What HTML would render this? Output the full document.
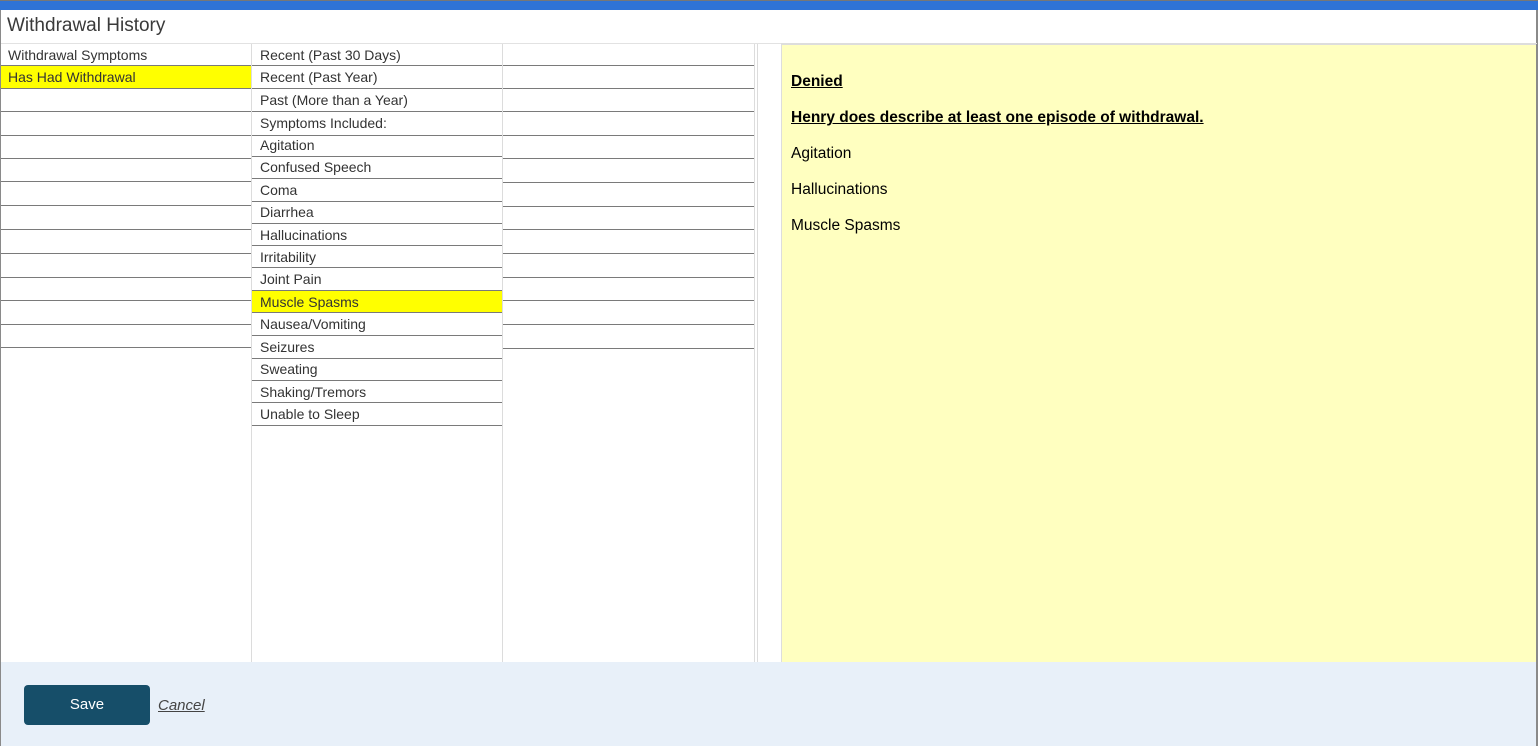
<!DOCTYPE html>
<html><head><style>
*{margin:0;padding:0;box-sizing:border-box}
body{width:1538px;height:746px;position:relative;overflow:hidden;background:#fff;font-family:"Liberation Sans",sans-serif}
.a{position:absolute}
.l{position:absolute;height:1px;background:#7a7a7a}
.t{position:absolute;font-size:14px;color:#333;line-height:22px;white-space:nowrap}
.y{font-size:15.5px;color:#000;position:absolute;left:791px;white-space:nowrap}
</style></head><body>
<div class="a" style="left:0;top:0;width:1538px;height:1px;background:#777"></div>
<div class="a" style="left:0;top:1px;width:1538px;height:9px;background:#2f73d6"></div>
<div class="a" style="left:0;top:10px;width:1px;height:736px;background:#8a8a8a"></div>
<div class="a" style="left:1536px;top:10px;width:2px;height:736px;background:#8a8a8a"></div>
<div class="a" style="left:7px;top:15px;font-size:19px;color:#3a3a3a;">Withdrawal History</div>
<div class="a" style="left:1px;top:43px;width:1536px;height:1px;background:#e2e2e2"></div>
<div class="a" style="left:251px;top:44px;width:1px;height:618px;background:#dcdcdc"></div>
<div class="a" style="left:502px;top:44px;width:1px;height:618px;background:#dcdcdc"></div>
<div class="a" style="left:754px;top:44px;width:1px;height:618px;background:#dcdcdc"></div>
<div class="a" style="left:757px;top:44px;width:1px;height:618px;background:#dcdcdc"></div>
<div class="a" style="left:781px;top:43px;width:755px;height:619px;background:#ffffc0;border-top:2px solid #ddd;border-left:1px solid #ddd"></div>
<div class="a" style="left:1px;top:66px;width:250px;height:22px;background:#ffff00"></div>
<div class="a" style="left:252px;top:291px;width:250px;height:21px;background:#ffff00"></div>
<div class="l" style="left:1px;top:65px;width:250px"></div><div class="l" style="left:503px;top:65px;width:251px"></div>
<div class="l" style="left:1px;top:88px;width:250px"></div><div class="l" style="left:503px;top:88px;width:251px"></div>
<div class="l" style="left:1px;top:111px;width:250px"></div><div class="l" style="left:503px;top:111px;width:251px"></div>
<div class="l" style="left:1px;top:135px;width:250px"></div><div class="l" style="left:503px;top:135px;width:251px"></div>
<div class="l" style="left:1px;top:158px;width:250px"></div><div class="l" style="left:503px;top:158px;width:251px"></div>
<div class="l" style="left:1px;top:181px;width:250px"></div><div class="l" style="left:503px;top:182px;width:251px"></div>
<div class="l" style="left:1px;top:205px;width:250px"></div><div class="l" style="left:503px;top:206px;width:251px"></div>
<div class="l" style="left:1px;top:229px;width:250px"></div><div class="l" style="left:503px;top:229px;width:251px"></div>
<div class="l" style="left:1px;top:253px;width:250px"></div><div class="l" style="left:503px;top:253px;width:251px"></div>
<div class="l" style="left:1px;top:277px;width:250px"></div><div class="l" style="left:503px;top:277px;width:251px"></div>
<div class="l" style="left:1px;top:300px;width:250px"></div><div class="l" style="left:503px;top:300px;width:251px"></div>
<div class="l" style="left:1px;top:324px;width:250px"></div><div class="l" style="left:503px;top:324px;width:251px"></div>
<div class="l" style="left:1px;top:347px;width:250px"></div><div class="l" style="left:503px;top:348px;width:251px"></div>
<div class="l" style="left:252px;top:65px;width:250px"></div>
<div class="l" style="left:252px;top:88px;width:250px"></div>
<div class="l" style="left:252px;top:111px;width:250px"></div>
<div class="l" style="left:252px;top:135px;width:250px"></div>
<div class="l" style="left:252px;top:156px;width:250px"></div>
<div class="l" style="left:252px;top:178px;width:250px"></div>
<div class="l" style="left:252px;top:201px;width:250px"></div>
<div class="l" style="left:252px;top:223px;width:250px"></div>
<div class="l" style="left:252px;top:245px;width:250px"></div>
<div class="l" style="left:252px;top:267px;width:250px"></div>
<div class="l" style="left:252px;top:290px;width:250px"></div>
<div class="l" style="left:252px;top:312px;width:250px"></div>
<div class="l" style="left:252px;top:335px;width:250px"></div>
<div class="l" style="left:252px;top:358px;width:250px"></div>
<div class="l" style="left:252px;top:380px;width:250px"></div>
<div class="l" style="left:252px;top:402px;width:250px"></div>
<div class="l" style="left:252px;top:425px;width:250px"></div>
<div class="t" style="left:8px;top:44px">Withdrawal Symptoms</div>
<div class="t" style="left:8px;top:66px">Has Had Withdrawal</div>
<div class="t" style="left:260px;top:44px">Recent (Past 30 Days)</div>
<div class="t" style="left:260px;top:66px">Recent (Past Year)</div>
<div class="t" style="left:260px;top:89px">Past (More than a Year)</div>
<div class="t" style="left:260px;top:112px">Symptoms Included:</div>
<div class="t" style="left:260px;top:134px">Agitation</div>
<div class="t" style="left:260px;top:156px">Confused Speech</div>
<div class="t" style="left:260px;top:179px">Coma</div>
<div class="t" style="left:260px;top:201px">Diarrhea</div>
<div class="t" style="left:260px;top:224px">Hallucinations</div>
<div class="t" style="left:260px;top:246px">Irritability</div>
<div class="t" style="left:260px;top:268px">Joint Pain</div>
<div class="t" style="left:260px;top:291px">Muscle Spasms</div>
<div class="t" style="left:260px;top:313px">Nausea/Vomiting</div>
<div class="t" style="left:260px;top:336px">Seizures</div>
<div class="t" style="left:260px;top:358px">Sweating</div>
<div class="t" style="left:260px;top:381px">Shaking/Tremors</div>
<div class="t" style="left:260px;top:403px">Unable to Sleep</div>
<div class="y" style="top:73px;font-weight:bold;text-decoration:underline">Denied</div>
<div class="y" style="top:109px;font-weight:bold;text-decoration:underline">Henry does describe at least one episode of withdrawal.</div>
<div class="y" style="top:145px">Agitation</div>
<div class="y" style="top:181px">Hallucinations</div>
<div class="y" style="top:217px">Muscle Spasms</div>
<div class="a" style="left:1px;top:662px;width:1535px;height:84px;background:#e8f0f9"></div>
<div class="a" style="left:24px;top:685px;width:126px;height:40px;background:#164e69;border-radius:4px;color:#fff;font-size:15px;text-align:center;line-height:40px">Save</div>
<div class="a" style="left:158px;top:697px;font-size:15px;color:#444;font-style:italic;text-decoration:underline">Cancel</div>
</body></html>
